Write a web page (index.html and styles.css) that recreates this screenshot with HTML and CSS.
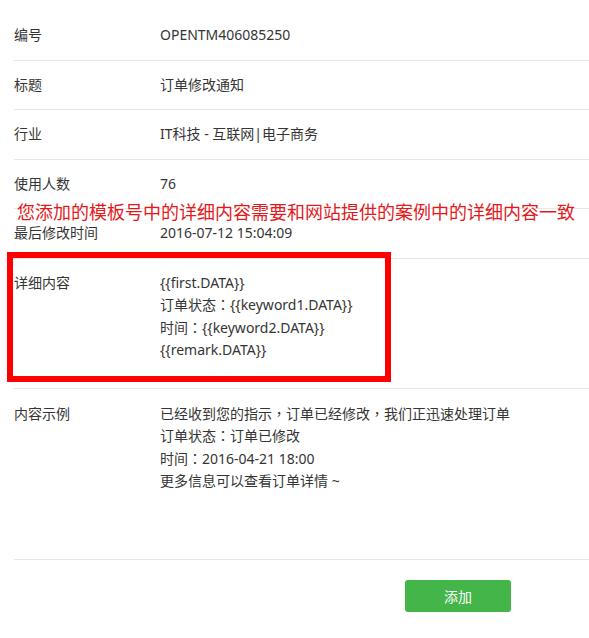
FILE: index.html
```html
<!DOCTYPE html>
<html lang="zh-CN">
  <head>
    <meta charset="UTF-8" />
    <meta name="viewport" content="width=device-width, initial-scale=1.0" />
    <title>模板详情</title>
    <link rel="stylesheet" href="styles.css">
  </head>
  <body>
    <div class="template-detail">
      <div class="row">
        <div class="label">编号</div>
        <div class="value">OPENTM406085250</div>
      </div>
      <div class="row">
        <div class="label">标题</div>
        <div class="value">订单修改通知</div>
      </div>
      <div class="row">
        <div class="label">行业</div>
        <div class="value">IT科技 - 互联网|电子商务</div>
      </div>
      <div class="row">
        <div class="label">使用人数</div>
        <div class="value">76</div>
      </div>
      <div class="row">
        <div class="label">最后修改时间</div>
        <div class="value">2016-07-12 15:04:09</div>
      </div>
      <div class="row multi">
        <div class="label">详细内容</div>
        <div class="value">
          <p>{{first.DATA}}</p>
          <p>订单状态<span class="punct" lang="zh-TW">：</span>{{keyword1.DATA}}</p>
          <p>时间<span class="punct" lang="zh-TW">：</span>{{keyword2.DATA}}</p>
          <p>{{remark.DATA}}</p>
        </div>
        <div class="mark-box"></div>
      </div>
      <div class="row multi example">
        <div class="label">内容示例</div>
        <div class="value">
          <p>已经收到您的指示<span class="punct" lang="zh-TW">，</span>订单已经修改<span class="punct" lang="zh-TW">，</span>我们正迅速处理订单</p>
          <p>订单状态<span class="punct" lang="zh-TW">：</span>订单已修改</p>
          <p>时间<span class="punct" lang="zh-TW">：</span>2016-04-21 18:00</p>
          <p>更多信息可以查看订单详情 ~</p>
        </div>
      </div>

      <div class="actions">
        <button class="btn">添加</button>
      </div>

      <p class="note">您添加的模板号中的详细内容需要和网站提供的案例中的详细内容一致</p>
    </div>
  </body>
</html>
```

FILE: styles.css
```css
body {
  margin: 0;
  font-family: "Noto Sans", "Noto Sans CJK SC", sans-serif;
  font-size: 14px;
  color: #353535;
  background: white;
}

.template-detail {
  position: relative;
  margin-left: 14px;
  padding-top: 11px;
}

.row {
  display: flex;
  padding: 14px 0;
  line-height: 20.5px;
  border-bottom: 1px solid #e7e7e7;
}

.label {
  width: 146px;
  flex-shrink: 0;
}

.value p {
  margin: 0;
}

/* centred full-width punctuation, like the original */
.punct {
  font-family: "Noto Sans CJK TC", sans-serif;
  line-height: 0;
}

.row.multi {
  position: relative;
  padding: 13px 0 26px;
  line-height: 22.5px;
}

.row.example {
  padding: 14px 0 66px;
}

.mark-box {
  position: absolute;
  left: -7px;
  top: -7px;
  width: 372px;
  height: 118px;
  border: 6px solid #f00;
}

.actions {
  padding: 20px 0 0 391px;
}

.btn {
  width: 106px;
  height: 32px;
  background: #44b549;
  color: white;
  border: none;
  border-radius: 3px;
  font-family: inherit;
  font-size: 14px;
  cursor: pointer;
}

.btn:hover {
  background: #2f9833;
}

.note {
  position: absolute;
  top: 203px;
  left: 3px;
  margin: 0;
  font-size: 18px;
  line-height: 18px;
  color: #e3191c;
  white-space: nowrap;
}
```
